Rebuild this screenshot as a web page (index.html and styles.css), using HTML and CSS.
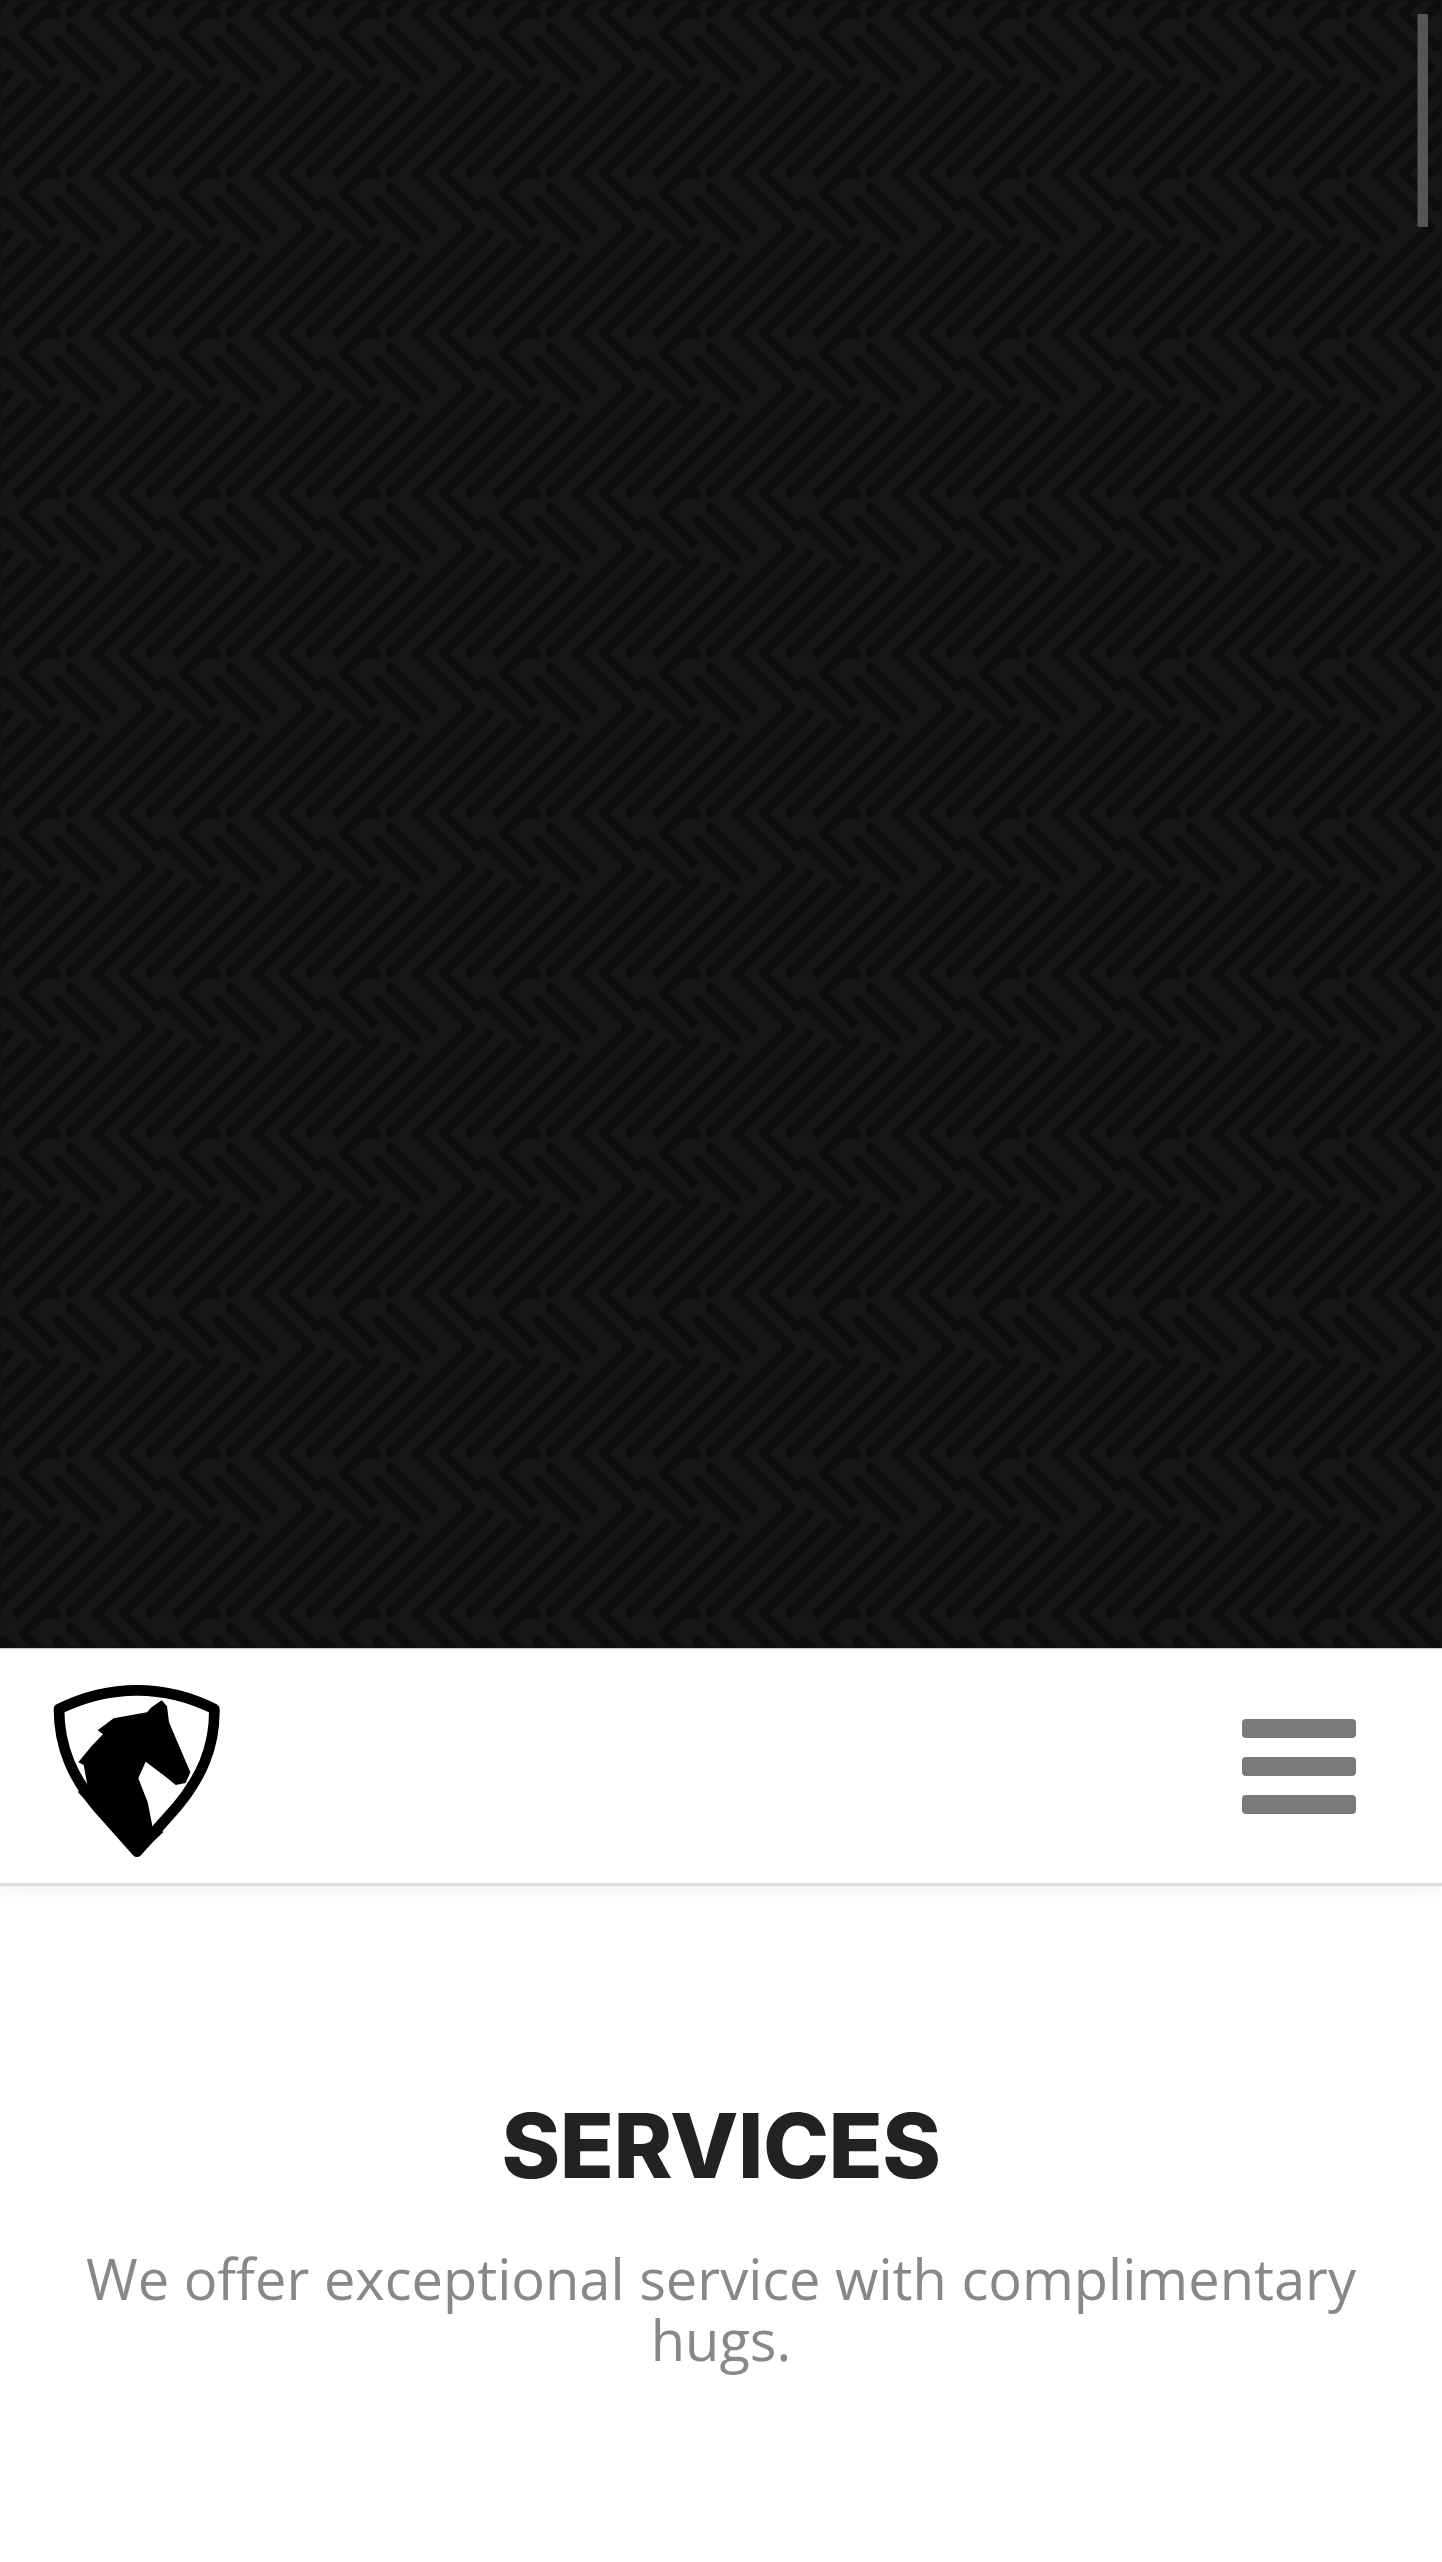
FILE: index.html
```html
<!DOCTYPE html>
<html>
<head>
	<title>Services</title>
	<link rel="stylesheet" href="styles.css">
</head>
<body>
	<div class="hero">
		<svg class="maze" width="100%" height="100%">
			<defs>
				<filter id="soft"><feGaussianBlur stdDeviation="1.8"></feGaussianBlur></filter>
				<g id="cell" fill="none" stroke="#080808" stroke-width="27" stroke-linecap="round" stroke-linejoin="round">
					<path d="M90 80L130 40L170 40"></path>
					<path d="M10 120L130 240"></path>
					<path d="M70 100L160 190"></path>
					<path d="M170 120L290 240"></path>
					<path d="M210 80L340 210"></path>
					<path d="M290 40L450 200L130 520"></path>
					<path d="M370 40L470 140"></path>
					<path d="M280 290L50 520"></path>
					<path d="M230 260L-30 520"></path>
					<path d="M170 240L-110 520"></path>
					<path d="M80 250L-190 520"></path>
					<path d="M30 220L-270 520"></path>
				</g>
				<pattern id="tile" width="160" height="160" patternUnits="userSpaceOnUse" viewBox="0 0 480 480">
					<rect width="480" height="480" fill="#141414"></rect>
					<use href="#cell"></use>
					<use href="#cell" x="-480"></use>
					<use href="#cell" x="480"></use>
					<use href="#cell" y="-480"></use>
					<use href="#cell" x="480" y="-480"></use>
					<use href="#cell" y="480"></use>
				</pattern>
			</defs>
			<rect width="100%" height="100%" fill="url(#tile)" filter="url(#soft)"></rect>
		</svg>
		<div class="scroll-thumb"></div>
	</div>
	<div class="nav">
		<svg class="logo" viewBox="140 185 540 540">
			<path class="shield" d="M176 272Q290 216 410 216Q530 216 642 272C644 390 600 480 530 565L410 700L290 565C220 480 176 390 176 272Z"></path>
			<path d="M410 716L232 520L262 505L250 440L234 432L272 385L308 348L292 336L340 300L440 282L452 268L484 246L500 264L506 312L570 462L556 494L526 500L492 472L436 430L414 480L442 552L458 632L490 640Z"></path>
		</svg>
		<div class="menu">
			<span></span>
			<span></span>
			<span></span>
		</div>
	</div>
	<div class="services">
		<h2>SERVICES</h2>
		<p>We offer exceptional service with complimentary hugs.</p>
	</div>
</body>
</html>
```

FILE: styles.css
```css
*{
	margin: 0;
	padding: 0;
	box-sizing: border-box;
}
body{
	background: #fff;
	font-family: "Open Sans", "Liberation Sans", sans-serif;
	overflow: hidden;
}
.hero{
	height: 1648px;
	background: #0e0e0e;
	position: relative;
	overflow: hidden;
}
.maze{
	display: block;
}
.scroll-thumb{
	position: absolute;
	top: 14px;
	right: 14px;
	width: 11px;
	height: 213px;
	background: #555;
	border-left: 1px solid #333;
}
.nav{
	height: 238px;
	padding: 8px 86px 0 47px;
	border-top: 1px solid #c8c8c8;
	border-bottom: 3px solid #ddd;
	background: #fff;
	box-shadow: 0 4px 18px rgba(0,0,0,.06);
	display: flex;
	align-items: center;
	justify-content: space-between;
}
.logo{
	width: 180px;
	height: 180px;
	display: block;
}
.shield{
	fill: #fff;
	stroke: #000;
	stroke-width: 32;
	stroke-linejoin: round;
}
.menu{
	display: flex;
	flex-direction: column;
	gap: 19px;
	margin-top: -7px;
}
.menu span{
	display: block;
	width: 114px;
	height: 19px;
	background: #7a7a7a;
	border-radius: 4px;
}
.services{
	padding: 210px 60px 60px;
	text-align: center;
}
.services h2{
	font-family: Inter, "Liberation Sans", sans-serif;
	font-size: 89px;
	font-weight: 800;
	line-height: 100px;
	letter-spacing: -.5px;
	color: #222;
}
.services p{
	margin-top: 52px;
	font-size: 56px;
	line-height: 61px;
	color: #888;
}
```
